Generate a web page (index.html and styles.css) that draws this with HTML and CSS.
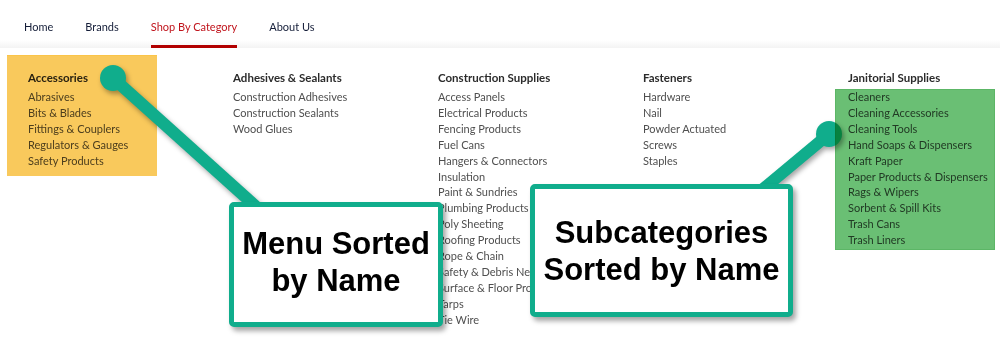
FILE: index.html
```html
<!DOCTYPE html>
<html lang="en">
<head>
<meta charset="utf-8">
<title>Shop By Category</title>
<link rel="stylesheet" href="styles.css">
</head>
<body>
<div class="page">
  <header class="nav">
    <a class="nav-item">Home</a>
    <a class="nav-item">Brands</a>
    <a class="nav-item active">Shop By Category</a>
    <a class="nav-item">About Us</a>
  </header>

  <div class="mega">
    <div class="col">
      <h3>Accessories</h3>
      <ul>
        <li>Abrasives</li>
        <li>Bits &amp; Blades</li>
        <li>Fittings &amp; Couplers</li>
        <li>Regulators &amp; Gauges</li>
        <li>Safety Products</li>
      </ul>
    </div>
    <div class="col">
      <h3>Adhesives &amp; Sealants</h3>
      <ul>
        <li>Construction Adhesives</li>
        <li>Construction Sealants</li>
        <li>Wood Glues</li>
      </ul>
    </div>
    <div class="col">
      <h3>Construction Supplies</h3>
      <ul>
        <li>Access Panels</li>
        <li>Electrical Products</li>
        <li>Fencing Products</li>
        <li>Fuel Cans</li>
        <li>Hangers &amp; Connectors</li>
        <li>Insulation</li>
        <li>Paint &amp; Sundries</li>
        <li>Plumbing Products</li>
        <li>Poly Sheeting</li>
        <li>Roofing Products</li>
        <li>Rope &amp; Chain</li>
        <li>Safety &amp; Debris Netting</li>
        <li>Surface &amp; Floor Protection</li>
        <li>Tarps</li>
        <li>Tie Wire</li>
      </ul>
    </div>
    <div class="col">
      <h3>Fasteners</h3>
      <ul>
        <li>Hardware</li>
        <li>Nail</li>
        <li>Powder Actuated</li>
        <li>Screws</li>
        <li>Staples</li>
      </ul>
    </div>
    <div class="col">
      <h3>Janitorial Supplies</h3>
      <ul>
        <li>Cleaners</li>
        <li>Cleaning Accessories</li>
        <li>Cleaning Tools</li>
        <li>Hand Soaps &amp; Dispensers</li>
        <li>Kraft Paper</li>
        <li>Paper Products &amp; Dispensers</li>
        <li>Rags &amp; Wipers</li>
        <li>Sorbent &amp; Spill Kits</li>
        <li>Trash Cans</li>
        <li>Trash Liners</li>
      </ul>
    </div>
  </div>

  <div class="hl hl-yellow"></div>

  <svg class="connectors" width="1000" height="345" viewBox="0 0 1000 345" aria-hidden="true">
    <line x1="113" y1="78" x2="262" y2="212" stroke="#10ad8c" stroke-width="12"/>
    <circle cx="113" cy="78" r="13" fill="#10ad8c"/>
    <line x1="829" y1="134" x2="757" y2="194" stroke="#10ad8c" stroke-width="12"/>
    <circle cx="829" cy="134" r="13" fill="#10ad8c"/>
  </svg>

  <div class="hl hl-green"></div>

  <div class="callout callout-menu">Menu Sorted<br>by Name</div>
  <div class="callout callout-sub">Subcategories<br>Sorted by Name</div>
</div>
</body>
</html>
```

FILE: styles.css
```css
* { box-sizing: border-box; }

html, body {
  margin: 0;
  padding: 0;
  background: #ffffff;
}

.page {
  position: relative;
  width: 1000px;
  height: 345px;
  overflow: hidden;
  background: #ffffff;
  font-family: Lato, "Open Sans", "Liberation Sans", sans-serif;
}

.nav {
  display: flex;
  gap: 32px;
  height: 48px;
  padding-left: 24px;
  background: linear-gradient(to bottom, #ffffff 0, #ffffff 40px, #f3f3f3 48px);
}

.nav-item {
  display: block;
  height: 48px;
  padding-top: 19px;
  font-size: 11px;
  line-height: 16px;
  color: #141d38;
  text-decoration: none;
  border-bottom: 3px solid transparent;
}

.nav-item.active {
  color: #c0141c;
  border-bottom-color: #b20000;
}

.mega {
  display: grid;
  grid-template-columns: repeat(5, 205px);
  padding: 22px 0 0 28px;
}

.col h3 {
  margin: 0 0 3px;
  font-size: 11.5px;
  line-height: 16px;
  font-weight: 700;
  color: #2b2b2b;
}

.col ul {
  margin: 0;
  padding: 0;
  list-style: none;
}

.col li {
  font-size: 11px;
  line-height: 15.9px;
  color: #4f4f4f;
  white-space: nowrap;
}

.hl {
  position: absolute;
  mix-blend-mode: multiply;
}

.hl-yellow {
  left: 7px;
  top: 55px;
  width: 150px;
  height: 121px;
  background: #f9c95c;
  border-top: 1px solid #fbc448;
}

.hl-green {
  left: 835px;
  top: 89px;
  width: 160px;
  height: 161px;
  background: #6abf74;
  border: 1px solid #5cb666;
}

.connectors {
  position: absolute;
  left: 0;
  top: 0;
  filter: drop-shadow(2px 3px 2.5px rgba(0, 0, 0, 0.35));
}

.callout {
  position: absolute;
  display: flex;
  align-items: center;
  justify-content: center;
  text-align: center;
  background: #ffffff;
  border: 5px solid #10ad8c;
  border-radius: 5px;
  box-shadow: 3px 4px 5px rgba(0, 0, 0, 0.35);
  font-family: "Liberation Sans", Arial, sans-serif;
  font-weight: 700;
  font-size: 31px;
  line-height: 37px;
  color: #000000;
}

.callout-menu {
  left: 229px;
  top: 202px;
  width: 214px;
  height: 125px;
  padding-bottom: 6px;
}

.callout-sub {
  left: 530px;
  top: 184px;
  width: 263px;
  height: 133px;
}
```
